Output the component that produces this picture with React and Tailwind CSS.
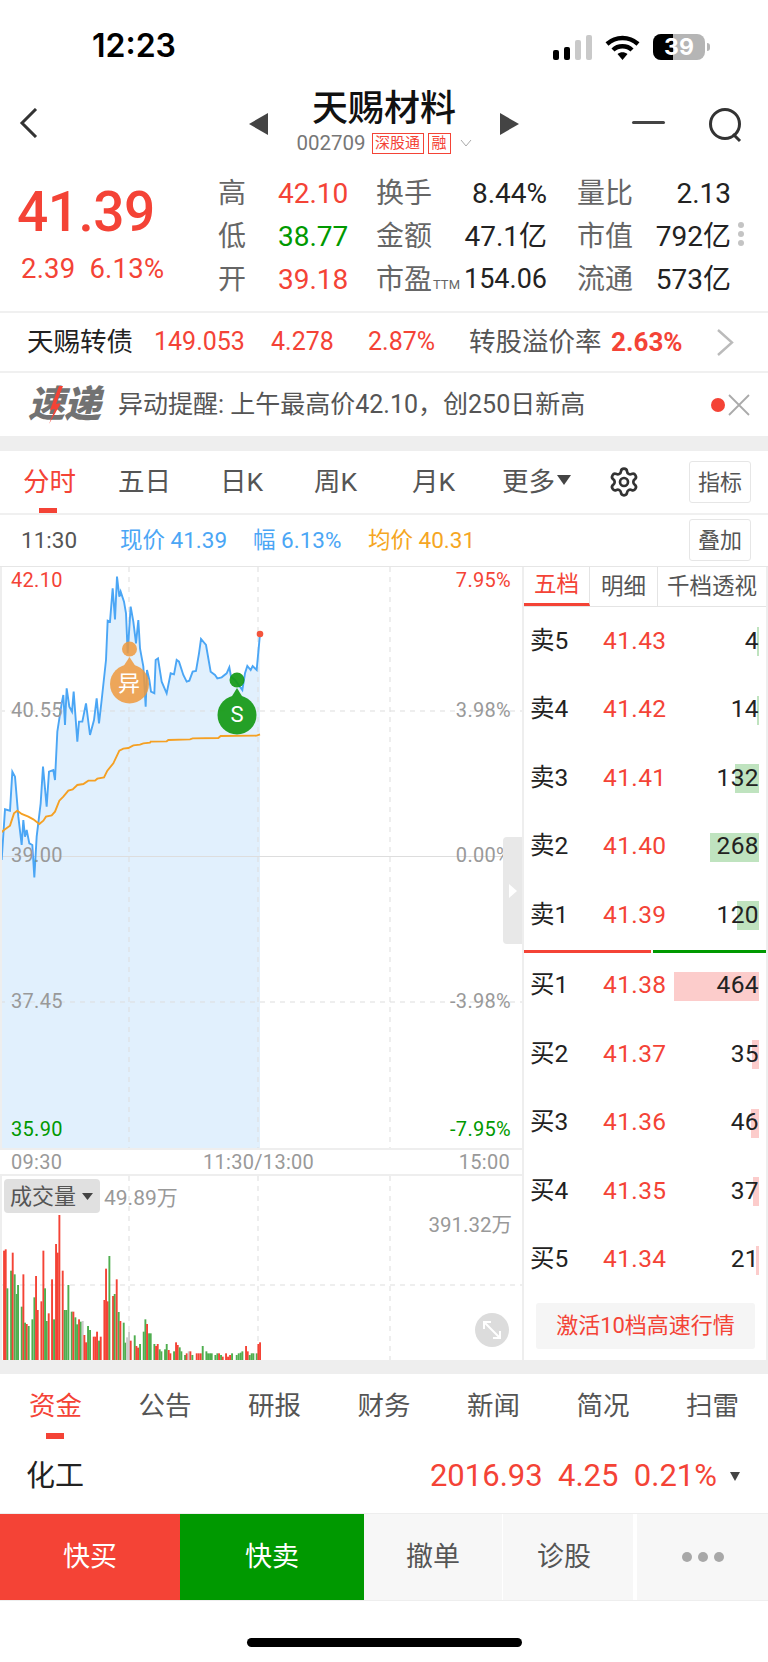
import { Settings } from "lucide-react"

const RED = "text-[#f44336]"
const FONT = { fontFamily: '"Roboto", "Noto Sans CJK SC", sans-serif' }

// 折线点，坐标取自参考图放大 3 倍后的位置
const priceLine = [[0,850],[5,900],[15,748],[30,752],[37,635],[45,650],[55,770],[65,855],[70,780],[75,830],[80,810],[88,850],[97,855],[103,952],[110,830],[122,730],[129,620],[140,740],[147,635],[160,630],[165,660],[172,515],[185,430],[190,405],[195,495],[200,385],[208,440],[216,455],[221,395],[232,545],[237,485],[247,485],[258,430],[270,525],[282,480],[290,415],[297,490],[305,420],[318,300],[323,182],[330,185],[338,85],[345,178],[351,50],[358,110],[362,95],[372,125],[378,160],[383,280],[392,140],[400,185],[408,250],[415,180],[420,265],[430,320],[437,440],[441,330],[448,360],[453,395],[463,400],[467,300],[474,295],[485,365],[500,400],[512,340],[522,343],[530,300],[537,305],[550,345],[560,365],[568,362],[578,335],[588,333],[597,280],[603,237],[618,255],[632,335],[645,345],[652,355],[665,352],[680,340],[688,322],[693,350],[705,360],[727,390],[735,340],[742,318],[752,330],[758,318],[770,330],[780,222]]
const avgLine = [[0,820],[12,810],[30,797],[42,760],[52,752],[65,762],[85,770],[100,778],[118,792],[130,782],[138,770],[155,766],[165,755],[178,722],[190,710],[205,692],[218,688],[232,675],[250,672],[265,662],[285,662],[292,656],[312,652],[322,632],[340,610],[358,572],[370,566],[385,564],[400,556],[420,554],[430,550],[450,548],[452,545],[500,544],[505,540],[570,538],[578,535],[655,534],[662,528],[770,527],[780,523]]

// [x, 顶部 y, 颜色]，同样是放大图坐标，底部 y=660
const volumeBars = [[3,215,"g"],[12,332,"r"],[17,328,"r"],[22,445,"g"],[33,392,"g"],[38,338,"r"],[44,403,"g"],[50,462,"g"],[54,435,"g"],[65,500,"g"],[70,403,"r"],[75,548,"g"],[80,552,"r"],[86,558,"g"],[97,538,"g"],[103,472,"g"],[108,408,"r"],[113,510,"r"],[124,484,"r"],[130,332,"r"],[135,445,"g"],[140,543,"g"],[146,520,"r"],[156,418,"r"],[162,538,"g"],[168,312,"r"],[173,338,"r"],[178,225,"r"],[188,392,"r"],[194,510,"g"],[199,510,"g"],[205,435,"g"],[215,515,"g"],[220,515,"r"],[226,532,"g"],[231,553,"g"],[237,538,"r"],[242,545,"g"],[248,543,"w"],[253,585,"r"],[258,607,"r"],[264,558,"g"],[270,570,"g"],[281,590,"r"],[286,590,"r"],[291,575,"r"],[297,602,"g"],[302,590,"r"],[313,480,"r"],[318,386,"r"],[323,484,"r"],[328,348,"g"],[339,468,"r"],[344,462,"g"],[350,418,"r"],[356,516,"g"],[361,543,"r"],[371,548,"g"],[376,608,"g"],[381,592,"w"],[387,575,"w"],[392,602,"r"],[404,586,"g"],[409,618,"r"],[414,623,"r"],[420,612,"g"],[431,575,"g"],[436,538,"g"],[441,552,"r"],[447,580,"g"],[452,580,"g"],[463,612,"g"],[468,618,"r"],[473,612,"r"],[479,628,"g"],[484,634,"g"],[495,628,"g"],[500,612,"g"],[506,630,"r"],[511,640,"r"],[522,634,"g"],[528,607,"r"],[533,615,"r"],[539,622,"g"],[544,634,"g"],[555,645,"g"],[560,640,"r"],[566,634,"w"],[571,634,"r"],[577,645,"g"],[590,640,"r"],[596,640,"r"],[602,640,"r"],[608,618,"g"],[619,634,"g"],[624,640,"g"],[630,640,"g"],[635,640,"g"],[646,645,"g"],[652,640,"g"],[657,640,"r"],[663,645,"g"],[668,650,"r"],[678,640,"r"],[684,650,"r"],[690,645,"r"],[696,640,"g"],[710,645,"g"],[716,640,"g"],[722,638,"g"],[727,634,"g"],[738,618,"r"],[743,634,"r"],[749,645,"g"],[755,640,"g"],[760,640,"g"],[770,640,"g"],[775,612,"r"],[780,607,"r"]]

const sellRows = [
  { label: "卖5", price: "41.43", qty: "4", bar: 2 },
  { label: "卖4", price: "41.42", qty: "14", bar: 2 },
  { label: "卖3", price: "41.41", qty: "132", bar: 24 },
  { label: "卖2", price: "41.40", qty: "268", bar: 49 },
  { label: "卖1", price: "41.39", qty: "120", bar: 22 },
]
const buyRows = [
  { label: "买1", price: "41.38", qty: "464", bar: 85 },
  { label: "买2", price: "41.37", qty: "35", bar: 7 },
  { label: "买3", price: "41.36", qty: "46", bar: 8 },
  { label: "买4", price: "41.35", qty: "37", bar: 6 },
  { label: "买5", price: "41.34", qty: "21", bar: 3 },
]

function toPoints(list) {
  return list.map(([x, y]) => `${x / 3},${y / 3 - 7}`).join(" ")
}

function StatusBar() {
  return (
    <div className="h-[90px] flex items-start pt-[28px] pl-[92px] pr-[58px] justify-between">
      <span className="text-[32px] leading-[36px] font-semibold text-black" style={{ fontFamily: "Inter, sans-serif" }}>12:23</span>
      <div className="flex items-center gap-[13px] h-[36px] mt-[1px]">
        <svg width="39" height="25" viewBox="0 0 39 25">
          <rect x="0" y="15" width="6" height="10" rx="2" fill="#000" />
          <rect x="11" y="12" width="6" height="13" rx="2" fill="#000" />
          <rect x="22" y="5" width="6" height="20" rx="2" fill="#c9c9c9" />
          <rect x="33" y="0" width="6" height="25" rx="2" fill="#c9c9c9" />
        </svg>
        <svg width="35" height="25" viewBox="0 0 35 25">
          <path d="M2 9 C11 1 24 1 33 9" stroke="#000" strokeWidth="4.4" fill="none" />
          <path d="M8 15 C13 10 22 10 27 15" stroke="#000" strokeWidth="4.4" fill="none" />
          <path d="M12.5 19 L17.5 25 L22.5 19 C19.5 16.5 15.5 16.5 12.5 19 Z" fill="#000" />
        </svg>
        <div className="flex items-center">
          <div className="relative w-[52px] h-[26px] rounded-[8px] bg-[#b5b5b5] flex">
            <div className="w-[20px] bg-black rounded-l-[8px]" />
            <span className="absolute inset-0 flex items-center justify-center text-white text-[23px] leading-[26px] font-bold" style={{ fontFamily: "Inter, sans-serif" }}>39</span>
          </div>
          <div className="w-[3px] h-[8px] ml-[2px] bg-[#b5b5b5] rounded-r-full" />
        </div>
      </div>
    </div>
  )
}

function Header() {
  return (
    <div className="h-[77px] relative flex justify-center">
      <svg className="absolute left-[19px] top-[18px]" width="20" height="30" viewBox="0 0 20 30">
        <path d="M17 1 L3 15 L17 29" stroke="#333" strokeWidth="3" fill="none" />
      </svg>
      <svg className="absolute left-[249px] top-[23px]" width="19" height="22" viewBox="0 0 19 22"><path d="M19 0 V22 L0 11 Z" fill="#444" /></svg>
      <svg className="absolute left-[500px] top-[23px]" width="19" height="22" viewBox="0 0 19 22"><path d="M0 0 V22 L19 11 Z" fill="#444" /></svg>
      <div className="absolute left-[632px] top-[31px] w-[33px] h-[3px] bg-[#444] rounded-full" />
      <svg className="absolute left-[708px] top-[18px]" width="35" height="35" viewBox="0 0 35 35">
        <circle cx="17" cy="16" r="14.5" stroke="#333" strokeWidth="3" fill="none" />
        <path d="M25 26 L32 33" stroke="#333" strokeWidth="3" />
      </svg>
      <div className="flex flex-col items-center">
        <div className="text-[36px] leading-[42px] font-medium text-[#111] mt-[-2px]">天赐材料</div>
        <div className="flex items-center h-[24px] mt-[1px] text-[#777]">
          <span className="text-[20.5px]">002709</span>
          <span className="ml-[6px] h-[21px] w-[52px] border border-[#f44336] text-[#f44336] text-[15px] leading-[19px] text-center">深股通</span>
          <span className="ml-[4px] h-[21px] w-[23px] border border-[#f44336] text-[#f44336] text-[15px] leading-[19px] text-center">融</span>
          <svg className="ml-[9px]" width="12" height="8" viewBox="0 0 12 8"><path d="M1 1 L6 7 L11 1" stroke="#aaa" strokeWidth="1" fill="none" /></svg>
        </div>
      </div>
    </div>
  )
}

function QuoteCell({ label, value, color, ttm }) {
  return (
    <>
      <span className="text-[#666] text-[28px] whitespace-nowrap">
        {label}
        {ttm && <span className="text-[13px] ml-[1px]">TTM</span>}
      </span>
      <span className={`${color} ${ttm ? "text-[27px]" : "text-[28px]"} text-right whitespace-nowrap`}>{value}</span>
    </>
  )
}

function Quote() {
  const dark = "text-[#222]"
  return (
    <div className="h-[144px] flex">
      <div className="w-[218px] pl-[17px] pt-[12px] shrink-0">
        <div className={`${RED} text-[55px] leading-[66px] font-medium tracking-[-0.5px]`}>41.39</div>
        <div className={`${RED} text-[27.5px] leading-[30px] pl-[4px] mt-[9px] tracking-[0.2px] whitespace-nowrap`}>2.39&nbsp;&nbsp;6.13%</div>
      </div>
      <div className="relative grid grid-cols-[60px_68px_30px_60px_111px_30px_55px_99px] grid-rows-[43px_43px_43px] items-center content-start pt-[5px]">
        <QuoteCell label="高" value="42.10" color={RED} />
        <span />
        <QuoteCell label="换手" value="8.44%" color={dark} />
        <span />
        <QuoteCell label="量比" value="2.13" color={dark} />
        <QuoteCell label="低" value="38.77" color="text-[#009900]" />
        <span />
        <QuoteCell label="金额" value="47.1亿" color={dark} />
        <span />
        <QuoteCell label="市值" value="792亿" color={dark} />
        <QuoteCell label="开" value="39.18" color={RED} />
        <span />
        <QuoteCell label="市盈" ttm value="154.06" color={dark} />
        <span />
        <QuoteCell label="流通" value="573亿" color={dark} />
        <div className="absolute left-[520px] top-[55px] flex flex-col gap-[3px]">
          <div className="w-[6px] h-[6px] rounded-full bg-[#c4c4c4]" />
          <div className="w-[6px] h-[6px] rounded-full bg-[#c4c4c4]" />
          <div className="w-[6px] h-[6px] rounded-full bg-[#c4c4c4]" />
        </div>
      </div>
    </div>
  )
}

function BondRow() {
  return (
    <div className="h-[62px] border-y-2 border-[#f0f0f0] flex items-center relative text-[26.5px]">
      <span className="ml-[27px] w-[127px] text-[#222] whitespace-nowrap">天赐转债</span>
      <span className={`${RED} w-[117px] text-[25px]`}>149.053</span>
      <span className={`${RED} w-[97px] text-[25px]`}>4.278</span>
      <span className={`${RED} w-[101px] text-[25px]`}>2.87%</span>
      <span className="w-[142px] text-[#555] whitespace-nowrap">转股溢价率</span>
      <span className={`${RED} text-[26px] font-bold`}>2.63%</span>
      <svg className="absolute left-[716px] top-[16px]" width="18" height="27" viewBox="0 0 18 27"><path d="M2 1 L16 13.5 L2 26" stroke="#bbb" strokeWidth="2.4" fill="none" /></svg>
    </div>
  )
}

function AlertRow() {
  return (
    <div className="h-[63px] flex items-center relative">
      <div className="ml-[28px] w-[90px] relative shrink-0">
        <span className="text-[37px] leading-[40px] font-black italic text-[#727272] tracking-[-1px]">速递</span>
        <svg className="absolute left-[17px] top-[0px]" width="20" height="40" viewBox="0 0 20 40"><path d="M14 1 L5 25 L10 24 L4 39 L16 18 L11 19 L18 1 Z" fill="#f44336" /></svg>
      </div>
      <span className="text-[25px] text-[#555] whitespace-nowrap">异动提醒: 上午最高价42.10，创250日新高</span>
      <div className="absolute left-[711px] top-[25px] w-[14px] h-[14px] rounded-full bg-[#f44336]" />
      <svg className="absolute left-[728px] top-[21px]" width="22" height="22" viewBox="0 0 22 22"><path d="M1 1 L21 21 M21 1 L1 21" stroke="#aaa" strokeWidth="1.8" /></svg>
    </div>
  )
}

function SmallButton({ children }) {
  return (
    <div className="w-[62px] h-[42px] border border-[#e6e6e6] rounded-[3px] flex items-center justify-center text-[22px] text-[#555]">
      {children}
    </div>
  )
}

function ChartTabs() {
  return (
    <div className="h-[64px] relative border-b-2 border-[#f0f0f0] text-[26.5px] text-[#555]">
      <div className="flex items-center h-[62px]">
        <span className={`${RED} ml-[23px] w-[95px]`}>分时</span>
        <span className="w-[102px]">五日</span>
        <span className="w-[94px]">日K</span>
        <span className="w-[98px]">周K</span>
        <span className="w-[90px]">月K</span>
        <span>更多</span>
        <svg className="ml-[2px] mb-[4px]" width="14" height="10" viewBox="0 0 14 10"><path d="M0 0 H14 L7 10 Z" fill="#444" /></svg>
        <Settings className="ml-[37px]" size={32} strokeWidth={2} color="#333" />
      </div>
      <div className="absolute left-[689px] top-[10px]"><SmallButton>指标</SmallButton></div>
      <div className="absolute left-[39px] top-[57px] w-[18px] h-[5px] bg-[#f44336]" />
    </div>
  )
}

function InfoRow() {
  return (
    <div className="h-[51px] flex items-center text-[22.5px] relative">
      <span className="ml-[21px] w-[99px] text-[#555]">11:30</span>
      <span className="w-[133px] text-[#4ba6f5] whitespace-nowrap">现价 41.39</span>
      <span className="w-[115px] text-[#4ba6f5] whitespace-nowrap">幅 6.13%</span>
      <span className="text-[#f5a623] whitespace-nowrap">均价 40.31</span>
      <div className="absolute left-[689px] top-[4px]"><SmallButton>叠加</SmallButton></div>
    </div>
  )
}

function PriceChart() {
  const fill = `0,293 ${toPoints(priceLine)} 260,581 0,581`
  const gridLabel = "absolute text-[20px] leading-[24px] tracking-[0.3px]"
  return (
    <div className="h-[581px] relative border-l-2 border-[#eeeeee] overflow-hidden">
      <svg className="absolute left-[-2px] top-0" width="522" height="581" viewBox="0 0 522 581">
        <polygon points={fill} fill="#e1f0fd" />
        <path d="M0 144 H522 M0 435 H522" stroke="#dddddd" strokeDasharray="5 5" />
        <path d="M0 289.5 H522" stroke="#dddddd" />
        <path d="M129 0 V581 M258 0 V581 M390 0 V581" stroke="#dddddd" strokeDasharray="5 5" />
        <polyline points={toPoints(priceLine)} fill="none" stroke="#4ba6f5" strokeWidth="1.9" />
        <polyline points={toPoints(avgLine)} fill="none" stroke="#f5a023" strokeWidth="1.9" />
        <circle cx="260" cy="67" r="3.3" fill="#f4543c" />
        {/* 异 标记 */}
        <g opacity="0.85">
          <circle cx="129.5" cy="82" r="7.5" fill="#f09a3e" />
          <path d="M129.5 90 L138 103 H121 Z" fill="#f09a3e" />
          <circle cx="129.5" cy="117" r="19.5" fill="#f09a3e" />
        </g>
        {/* S 标记 */}
        <g opacity="0.92">
          <circle cx="237" cy="113" r="7.5" fill="#159a15" />
          <path d="M237 121 L245 134 H229 Z" fill="#159a15" />
          <circle cx="237" cy="148" r="19.5" fill="#159a15" />
        </g>
      </svg>
      <span className="absolute left-[107px] top-[103px] w-[40px] text-center text-white text-[22px] leading-[28px]">异</span>
      <span className="absolute left-[215px] top-[134px] w-[40px] text-center text-white text-[22px] leading-[28px]">S</span>

      <span className={`${gridLabel} left-[9px] top-[1px] text-[#f44336]`}>42.10</span>
      <span className={`${gridLabel} left-[9px] top-[131px] text-[#999]`}>40.55</span>
      <span className={`${gridLabel} left-[9px] top-[276px] text-[#999]`}>39.00</span>
      <span className={`${gridLabel} left-[9px] top-[422px] text-[#999]`}>37.45</span>
      <span className={`${gridLabel} left-[9px] top-[550px] text-[#009900]`}>35.90</span>
      <span className={`${gridLabel} right-[11px] top-[1px] text-[#f44336]`}>7.95%</span>
      <span className={`${gridLabel} right-[11px] top-[131px] text-[#999]`}>3.98%</span>
      <span className={`${gridLabel} right-[11px] top-[276px] text-[#999]`}>0.00%</span>
      <span className={`${gridLabel} right-[11px] top-[422px] text-[#999]`}>-3.98%</span>
      <span className={`${gridLabel} right-[11px] top-[550px] text-[#009900]`}>-7.95%</span>

      <div className="absolute right-0 top-[270px] w-[19px] h-[107px] bg-[#e8e8e8] rounded-l-[4px] flex items-center justify-center">
        <svg width="8" height="14" viewBox="0 0 8 14"><path d="M0 0 L8 7 L0 14 Z" fill="#fff" /></svg>
      </div>
    </div>
  )
}

function VolumeChart() {
  return (
    <div className="h-[184px] relative border-l-2 border-[#eeeeee] overflow-hidden">
      <svg className="absolute left-[-2px] top-0" width="522" height="184" viewBox="0 0 522 184">
        <path d="M0 109 H522" stroke="#dddddd" strokeDasharray="5 5" />
        <path d="M129 0 V184 M258 0 V184 M390 0 V184" stroke="#dddddd" strokeDasharray="5 5" />
        {volumeBars.map(([x, top, c], i) => (
          <rect
            key={i}
            x={x / 3 - 0.9}
            y={top / 3 - 36}
            width="1.9"
            height={(660 - top) / 3}
            fill={c === "r" ? "#f44336" : c === "g" ? "#4fae4f" : "#cccccc"}
          />
        ))}
      </svg>
      <div className="absolute left-[2px] top-[3px] w-[96px] h-[34px] rounded-[4px] bg-[#e0e0e0] flex items-center pl-[6px] text-[22px] text-[#555]">
        成交量
        <svg className="ml-[6px]" width="11" height="7" viewBox="0 0 11 7"><path d="M0 0 H11 L5.5 7 Z" fill="#444" /></svg>
      </div>
      <span className="absolute left-[102px] top-[9px] text-[21px] leading-[26px] text-[#999]">49.89万</span>
      <span className="absolute right-[10px] top-[36px] text-[20.5px] leading-[26px] text-[#999]">391.32万</span>
      <div className="absolute left-[473px] top-[137px] w-[34px] h-[34px] rounded-full bg-[#dcdcdc] flex items-center justify-center">
        <svg width="22" height="22" viewBox="0 0 22 22" fill="none" stroke="#fff" strokeWidth="2">
          <path d="M3 3 L19 19 M3 10 V3 H10 M19 12 V19 H12" />
        </svg>
      </div>
    </div>
  )
}

function BookRow({ row, barColor }) {
  return (
    <div className="h-[68.5px] flex items-center relative pl-[6px] pr-[7px]">
      <div className="absolute right-[7px] top-[20px] h-[29px]" style={{ width: row.bar, backgroundColor: barColor }} />
      <span className="relative w-[73px] text-[24.5px] text-[#222]">{row.label}</span>
      <span className={`relative text-[24.5px] tracking-[0.4px] ${RED}`}>{row.price}</span>
      <span className="relative ml-auto text-[24.5px] tracking-[0.4px] text-[#222]">{row.qty}</span>
    </div>
  )
}

function OrderBook() {
  return (
    <div className="w-[246px] shrink-0 border-l-2 border-r-2 border-[#eeeeee] h-full">
      <div className="h-[40px] flex border-b border-[#e4e4e4] text-[22.5px] text-[#555]">
        <div className="w-[66px] border-b-[3px] border-b-[#f44336] text-[#f44336] flex items-center justify-center border-r border-r-[#e4e4e4]">五档</div>
        <div className="w-[68px] flex items-center justify-center border-r border-[#e4e4e4]">明细</div>
        <div className="flex-1 flex items-center justify-center whitespace-nowrap">千档透视</div>
      </div>
      <div>
        {sellRows.map((row) => <BookRow key={row.label} row={row} barColor="#bfe3bf" />)}
      </div>
      <div className="flex gap-[2px] h-[3px]">
        <div className="w-[127px] bg-[#f44336]" />
        <div className="flex-1 bg-[#009900]" />
      </div>
      <div className="mt-[-1px]">
        {buyRows.map((row) => <BookRow key={row.label} row={row} barColor="#fccccb" />)}
      </div>
      <div className={`ml-[12px] mr-[11px] mt-[8.5px] h-[46px] rounded-[3px] bg-[#f5f5f5] flex items-center justify-center text-[22px] ${RED}`}>
        激活10档高速行情
      </div>
    </div>
  )
}

function ChartArea() {
  return (
    <div className="h-[794px] flex border-t border-[#e6e6e6]">
      <div className="w-[522px] shrink-0 flex flex-col">
        <PriceChart />
        <div className="h-[28px] border-y-2 border-[#eeeeee] relative flex justify-between pl-[11px] pr-[12px] text-[20px] leading-[24px] text-[#999] tracking-[0.3px]">
          <span>09:30</span>
          <span className="absolute left-[203px]">11:30/13:00</span>
          <span>15:00</span>
        </div>
        <VolumeChart />
      </div>
      <OrderBook />
    </div>
  )
}

function InfoTabs() {
  const tabs = ["公告", "研报", "财务", "新闻", "简况", "扫雷"]
  return (
    <div className="h-[68px] relative flex items-center justify-between pl-[29px] pr-[29px] pb-[4px] text-[26.5px] text-[#555]">
      <span className={RED}>资金</span>
      {tabs.map((tab) => <span key={tab}>{tab}</span>)}
      <div className="absolute left-[46px] top-[59px] w-[18px] h-[6px] bg-[#f44336]" />
    </div>
  )
}

function SectorRow() {
  return (
    <div className="h-[71px] flex items-center pl-[26px] pb-[2px]">
      <span className="text-[29px] text-[#222]">化工</span>
      <span className={`ml-auto text-[31px] ${RED} whitespace-nowrap`}>2016.93&nbsp;&nbsp;4.25&nbsp;&nbsp;0.21%</span>
      <svg className="ml-[13px] mr-[28px]" width="10" height="9" viewBox="0 0 10 9"><path d="M0 0 H10 L5 9 Z" fill="#444" /></svg>
    </div>
  )
}

function BottomBar() {
  return (
    <div className="h-[88px] flex border-y border-[#eeeeee] text-[27px]">
      <div className="w-[180px] bg-[#f44336] text-white flex items-center justify-center">快买</div>
      <div className="w-[184px] bg-[#009900] text-white flex items-center justify-center">快卖</div>
      <div className="w-[138px] bg-[#f7f7f7] text-[#555] flex items-center justify-center">撤单</div>
      <div className="w-[130px] ml-[1px] pr-[8px] bg-[#f7f7f7] text-[#555] flex items-center justify-center">诊股</div>
      <div className="flex-1 ml-[4px] bg-[#f7f7f7] flex items-center justify-center gap-[6px]">
        <div className="w-[10px] h-[10px] rounded-full bg-[#a8a8a8]" />
        <div className="w-[10px] h-[10px] rounded-full bg-[#a8a8a8]" />
        <div className="w-[10px] h-[10px] rounded-full bg-[#a8a8a8]" />
      </div>
    </div>
  )
}

export default function App() {
  return (
    <div className="w-[768px] h-[1662px] bg-white overflow-hidden" style={FONT}>
      <StatusBar />
      <Header />
      <Quote />
      <BondRow />
      <AlertRow />
      <div className="h-[15px] bg-[#eeeeee]" />
      <ChartTabs />
      <InfoRow />
      <ChartArea />
      <div className="h-[14px] bg-[#eeeeee]" />
      <InfoTabs />
      <SectorRow />
      <BottomBar />
      <div className="flex justify-center pt-[37px]">
        <div className="w-[275px] h-[9px] rounded-full bg-black" />
      </div>
    </div>
  )
}
